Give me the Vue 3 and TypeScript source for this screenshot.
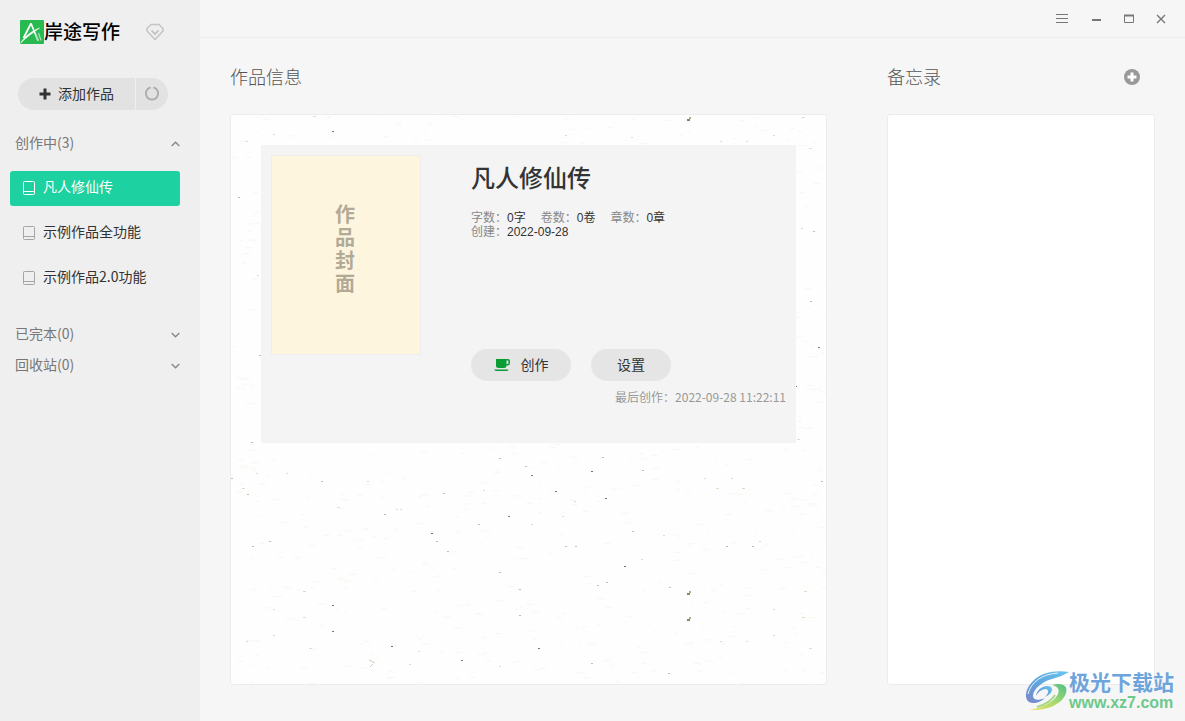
<script setup lang="ts">
import { ref } from 'vue'

interface Speck {
  x: number
  y: number
  r: number
  tone: string
}

const works = ['凡人修仙传', '示例作品全功能', '示例作品2.0功能']
const selected = ref(0)

const stats = [
  { label: '字数：', value: '0字' },
  { label: '卷数：', value: '0卷' },
  { label: '章数：', value: '0章' },
]

const dark = [
  [201, 419], [102, 491], [102, 517], [161, 532], [231, 546], [278, 402], [325, 377], [361, 357],
  [375, 384], [301, 361], [394, 452], [419, 328], [102, 17], [565, 272], [308, 534], [588, 233],
]
const mid = [
  [154, 400], [206, 427], [269, 344], [91, 367], [22, 432], [39, 427], [17, 380], [21, 328], [1, 364],
  [248, 410], [217, 437], [269, 458], [289, 475], [289, 501], [213, 379], [376, 468], [367, 471],
  [439, 473], [438, 559], [361, 549], [402, 417], [335, 432], [345, 432], [496, 432], [522, 432],
  [412, 356], [372, 343], [295, 352], [591, 367], [583, 117], [580, 187], [29, 241], [8, 83],
]
const pale = [
  [43, 495], [43, 521], [16, 527], [188, 537], [179, 550], [269, 552], [344, 387], [332, 402], [301, 410],
  [433, 421], [474, 364], [501, 364], [490, 527], [516, 527], [543, 495], [543, 521], [411, 445],
  [16, 27], [43, 20], [27, 161], [335, 21], [490, 27], [516, 27], [543, 21], [401, 23], [571, 114],
  [166, 395], [170, 395], [26, 359], [56, 359], [137, 367], [253, 376], [529, 427],
]
const tan = [
  [73, 477], [73, 503], [79, 534], [12, 374], [107, 393], [567, 325], [579, 534], [486, 374],
  [512, 374], [574, 477], [572, 503], [579, 34], [572, 3], [83, 2],
]
const clumps = [[458, 4], [458, 478], [458, 504]]

const toSpecks = (points: number[][], r: number, tone: string): Speck[] =>
  points.map(([x, y]) => ({ x, y, r, tone }))

const specks: Speck[] = [
  ...toSpecks(dark, 2, '#74746e'),
  ...toSpecks(mid, 2, '#bebeba'),
  ...toSpecks(pale, 2, '#dcdcd6'),
  ...toSpecks(tan, 3, '#e0dcc6'),
]

let seed = 20220928
const random = () => {
  seed = (seed * 16807) % 2147483647
  return seed / 2147483647
}
const fibres = Array.from({ length: 2600 }, () => {
  const x = Math.round(random() * 1200)
  const y = Math.round(random() * 900)
  const dx = Math.round(2 + random() * 7)
  const dy = Math.round(random() * 3 - 1.5)
  return `M${x} ${y}l${dx} ${dy}`
}).join('')
</script>

<template>
  <div class="app">
    <aside class="sidebar">
      <header class="brand">
        <svg class="brand-mark" viewBox="0 0 24 24" aria-hidden="true">
          <rect width="24" height="24" rx="1" fill="#28b950" />
          <path d="M3.500 18 11 3.500 18 20.500" fill="none" stroke="#fff" stroke-width="1.700" stroke-linejoin="bevel" />
          <path d="M0.500 23C5 16 11 11.500 19.500 8 13 12.500 7 17 0.500 23Z" fill="#fff" stroke="#fff" stroke-width="0.500" />
          <path d="M15.500 14.500 18.500 21M18.500 13 21 20.500" stroke="#a9e0b9" stroke-width="1.200" />
        </svg>
        <span class="brand-name">岸途写作</span>
        <button class="plain gem" type="button" aria-label="会员">
          <svg width="18" height="18" viewBox="0 0 18 18" fill="none" stroke="#c4c4c4" stroke-width="1.500" stroke-linejoin="round">
            <path d="M5 1.500h8L17 5.500V8L9 16.500 1 8V5.500Z" />
            <path d="M5.500 7.500 9 11l3.500-3.500" stroke-width="1.800" />
          </svg>
        </button>
      </header>

      <div class="add-group">
        <button class="add" type="button">
          <svg width="12" height="12" viewBox="0 0 12 12" aria-hidden="true">
            <path d="M6 0.500v11M0.500 6h11" stroke="#333" stroke-width="3" />
          </svg>
          <span class="label">添加作品</span>
        </button>
        <button class="sync" type="button" aria-label="同步">
          <svg width="16" height="16" viewBox="0 0 16 16" fill="none" stroke="#aaa" stroke-width="1.800">
            <path d="M9.500 1.400a6.200 6.200 0 1 1-3 0" />
          </svg>
        </button>
      </div>

      <nav class="groups">
        <button class="group" type="button">
          <span class="label">创作中(3)</span>
          <svg width="9" height="6" viewBox="0 0 9 6"><path d="M0.700 5 4.500 1.200 8.300 5" /></svg>
        </button>
        <ul class="works">
          <li v-for="(work, i) in works" :key="work">
            <button class="work" :class="{ active: i === selected }" type="button" @click="selected = i">
              <svg width="12" height="14" viewBox="0 0 12 14" fill="none" stroke="currentColor">
                <rect x="0.500" y="0.500" width="11" height="13" rx="1" />
                <path d="M1 10.500h10" />
              </svg>
              <span class="label">{{ work }}</span>
            </button>
          </li>
        </ul>
        <button class="group" type="button">
          <span class="label">已完本(0)</span>
          <svg width="9" height="6" viewBox="0 0 9 6"><path d="M0.700 1 4.500 4.800 8.300 1" /></svg>
        </button>
        <button class="group" type="button">
          <span class="label">回收站(0)</span>
          <svg width="9" height="6" viewBox="0 0 9 6"><path d="M0.700 1 4.500 4.800 8.300 1" /></svg>
        </button>
      </nav>
    </aside>

    <main class="main">
      <div class="titlebar">
        <button class="plain win menu" type="button" aria-label="菜单">
          <svg width="12" height="10" viewBox="0 0 12 10"><path d="M0 0.500h12M0 4.500h12M0 8.500h12" /></svg>
        </button>
        <button class="plain win" type="button" aria-label="最小化">
          <svg width="10" height="10" viewBox="0 0 10 10"><path d="M0 6h9" stroke-width="2" /></svg>
        </button>
        <button class="plain win" type="button" aria-label="最大化">
          <svg width="10" height="10" viewBox="0 0 10 10"><path d="M0.500 1v7.500h9V1" /><path d="M0 1.500h10" stroke-width="2" /></svg>
        </button>
        <button class="plain win" type="button" aria-label="关闭">
          <svg width="10" height="10" viewBox="0 0 10 10"><path d="M1 1l8 8M9 1 1 9" stroke-width="1.400" /></svg>
        </button>
      </div>

      <div class="columns">
        <section class="column">
          <div class="head"><h2>作品信息</h2></div>
          <div class="panel">
            <svg class="paper" aria-hidden="true">
              <path :d="fibres" class="fibre" />
              <rect
                v-for="(s, i) in specks"
                :key="i"
                :x="s.x - 1"
                :y="s.y - 1"
                :width="s.r"
                height="1"
                :fill="s.tone"
              />
              <g v-for="([x, y], i) in clumps" :key="'c' + i">
                <rect :x="x - 2" :y="y" width="3" height="2" fill="#8a8468" />
                <rect :x="x" :y="y - 2" width="2" height="2" fill="#b5aa87" />
              </g>
              <path d="M138 545l4 2 2 1M142 549l-3 3" stroke="#d2d0b8" fill="none" />
            </svg>

            <article class="card">
              <div class="cover"><span>作品封面</span></div>
              <div class="details">
                <div class="info">
                  <div>
                    <h1>凡人修仙传</h1>
                    <dl class="stats">
                      <div v-for="s in stats" :key="s.label">
                        <dt>{{ s.label }}</dt><dd>{{ s.value }}</dd>
                      </div>
                    </dl>
                    <dl class="stats">
                      <div><dt>创建：</dt><dd>2022-09-28</dd></div>
                    </dl>
                  </div>
                  <div class="actions">
                    <button class="pill write" type="button">
                      <svg width="16" height="12" viewBox="0 0 16 12" aria-hidden="true">
                        <path d="M2 0h12a2 2 0 0 1 2 2v2a2.500 2.500 0 0 1-2.500 2.500H12.500A2.500 2.500 0 0 1 10 9H4.500A2.500 2.500 0 0 1 2 6.500ZM12.500 1.500V5H13.500A1 1 0 0 0 14.500 4V2.500A1 1 0 0 0 13.500 1.500Z" fill="#0a9c35" fill-rule="evenodd" />
                        <path d="M0 10.500h14.500l-1 1.500h-12Z" fill="#0a9c35" />
                      </svg>
                      <span class="label">创作</span>
                    </button>
                    <button class="pill settings" type="button"><span class="label">设置</span></button>
                  </div>
                </div>
                <p class="last">最后创作：2022-09-28 11:22:11</p>
              </div>
            </article>
          </div>
        </section>

        <section class="column">
          <div class="head">
            <h2>备忘录</h2>
            <button class="plain new-memo" type="button" aria-label="新建备忘">
              <svg width="16" height="16" viewBox="0 0 16 16">
                <circle cx="8" cy="8" r="8" fill="#999" />
                <path d="M8 3.500v9M3.500 8h9" stroke="#fff" stroke-width="3" />
              </svg>
            </button>
          </div>
          <div class="panel memo"></div>
        </section>
      </div>
    </main>

    <div class="watermark">
      <svg width="44" height="42" viewBox="0 0 44 42" aria-hidden="true">
        <defs>
          <linearGradient id="sky" x1="0" y1="1" x2="1" y2="0">
            <stop offset="0" stop-color="#7a86c9" />
            <stop offset="0.500" stop-color="#5fa8df" />
            <stop offset="1" stop-color="#6cc4f0" />
          </linearGradient>
          <linearGradient id="leaf" x1="0" y1="1" x2="1" y2="0">
            <stop offset="0" stop-color="#f0e25e" />
            <stop offset="0.500" stop-color="#a5d96c" />
            <stop offset="1" stop-color="#4fbf8a" />
          </linearGradient>
        </defs>
        <path d="M44 2C31 0 17 2 8 11 0 19-1 29 4 32 8 34 15 33 20 28 13 31 8 30 8 26 8 19 18 11 27 9 34 7 39 5 44 2Z" fill="url(#sky)" />
        <path d="M3 24C6 12 17 4 33 3" fill="none" stroke="#e8f4fb" stroke-width="1" />
        <path d="M11 26C12 19 20 14 26 17 29 20 25 25 20 27 24 23 24 20 21 19 17 19 13 22 11 26Z" fill="url(#sky)" />
        <path d="M27 15C38 12 43 16 41 23 38 33 24 41 4 40 18 38 30 31 33 24 35 19 32 16 27 15Z" fill="url(#leaf)" />
        <path d="M12 37C22 34 27 30 30 25" fill="none" stroke="#a5d98a" stroke-width="2" />
      </svg>
      <div class="watermark-text">
        <span class="site">极光下载站</span>
        <span class="url">www.xz7.com</span>
      </div>
    </div>
  </div>
</template>

<style>
body {
  margin: 0;
}
</style>

<style scoped>
.app {
  position: relative;
  display: flex;
  min-height: 100vh;
  background: #f6f6f6;
  color: #333;
  font: 14px/20px "Noto Sans CJK SC", sans-serif;
}

button {
  margin: 0;
  padding: 0;
  border: 0;
  background: none;
  color: inherit;
  font: inherit;
  cursor: pointer;
}

svg {
  display: block;
  flex: none;
}

h1,
h2,
p,
dl,
dd,
ul {
  margin: 0;
  padding: 0;
}

.label {
  padding-bottom: 3px;
}

.plain {
  display: flex;
  align-items: center;
  justify-content: center;
}

.sidebar {
  box-sizing: border-box;
  flex: none;
  width: 200px;
  padding: 20px 20px 0 10px;
  background: #efefef;
}

.brand {
  display: flex;
  align-items: center;
  height: 24px;
  padding-left: 10px;
}

.brand-mark {
  width: 24px;
  height: 24px;
}

.brand-name {
  padding-bottom: 2px;
  color: #000;
  font-size: 19px;
  font-weight: 500;
  line-height: 24px;
}

.gem {
  margin-left: auto;
  margin-right: 16px;
}

.add-group {
  display: flex;
  gap: 1px;
  height: 32px;
  margin: 34px 12px 18px 8px;
}

.add,
.sync {
  display: flex;
  align-items: center;
  justify-content: center;
  background: #e2e2e2;
}

.add {
  flex: 1;
  gap: 7px;
  border-radius: 16px 0 0 16px;
}

.sync {
  width: 32px;
  border-radius: 0 16px 16px 0;
}

.group {
  display: flex;
  align-items: center;
  justify-content: space-between;
  width: 100%;
  height: 31px;
  padding: 0 0 0 5px;
  color: #777;
}

.group path {
  fill: none;
  stroke: #888;
  stroke-width: 1.4;
}

.works {
  display: flex;
  flex-direction: column;
  gap: 10px;
  margin: 12px 0 23px;
  list-style: none;
}

.work {
  display: flex;
  align-items: center;
  gap: 8px;
  width: 100%;
  height: 35px;
  padding: 0 0 2px 13px;
  border-radius: 3px;
}

.work svg {
  color: #a5a5a5;
}

.work.active {
  background: #1dd1a1;
  color: #fff;
}

.work.active svg {
  color: #fff;
}

.main {
  display: flex;
  flex: 1;
  flex-direction: column;
  min-width: 0;
}

.titlebar {
  display: flex;
  justify-content: flex-end;
  height: 37px;
  padding-right: 8px;
  border-bottom: 1px solid #ededed;
}

.win {
  width: 32px;
}

.menu {
  margin-right: 3px;
}

.win path {
  fill: none;
  stroke: #777;
}

.columns {
  display: grid;
  flex: 1;
  grid-template-columns: minmax(0, 1fr) 268px;
  gap: 60px;
  padding: 0 30px 36px;
}

.column {
  display: flex;
  flex-direction: column;
}

.head {
  display: flex;
  align-items: center;
  justify-content: space-between;
  box-sizing: border-box;
  height: 76px;
  padding: 2px 15px 0 0;
}

h2 {
  padding-bottom: 2px;
  color: #555;
  font-size: 18px;
  font-weight: 300;
  line-height: 24px;
}

.panel {
  position: relative;
  flex: 1;
  padding: 30px;
  border: 1px solid #ececec;
  border-radius: 3px;
  background: #fefefe;
}

.paper {
  position: absolute;
  inset: 0;
  width: 100%;
  height: 100%;
}

.fibre {
  fill: none;
  stroke: #f8f7f2;
}

.card {
  position: relative;
  display: flex;
  gap: 50px;
  box-sizing: border-box;
  min-height: 298px;
  padding: 10px;
  background: #f4f4f4;
}

.cover {
  display: flex;
  align-items: center;
  justify-content: center;
  box-sizing: border-box;
  flex: none;
  width: 150px;
  height: 200px;
  border: 1px solid #eee;
  background: #fef5de;
}

.cover span {
  width: 20px;
  padding: 0 2px 14px 0;
  color: #b2aa96;
  font-size: 20px;
  font-weight: 700;
  line-height: 23px;
}

.details {
  flex: 1;
}

.info {
  display: flex;
  flex-direction: column;
  justify-content: space-between;
  box-sizing: border-box;
  height: 226px;
  padding-top: 6px;
}

h1 {
  margin-bottom: 18px;
  font-size: 24px;
  font-weight: 500;
  line-height: 32px;
}

.stats {
  display: flex;
  gap: 15px;
  font: 12px/14px "Liberation Sans", "Noto Sans CJK SC", sans-serif;
}

.stats div {
  display: flex;
}

.stats dt {
  color: #888;
}

.actions {
  display: flex;
  gap: 20px;
}

.pill {
  display: flex;
  align-items: center;
  justify-content: center;
  height: 32px;
  border-radius: 16px;
  background: #e5e5e5;
}

.write {
  gap: 11px;
  width: 100px;
}

.settings {
  width: 80px;
}

.last {
  margin-top: 6px;
  color: #999;
  font-size: 12px;
  line-height: 20px;
  text-align: right;
}

.memo {
  background: #fff;
}

.watermark {
  position: absolute;
  right: 11px;
  bottom: 8px;
  display: flex;
  align-items: center;
}

.watermark-text {
  display: flex;
  flex-direction: column;
}

.site {
  color: #6ea4dc;
  font-size: 21px;
  font-weight: 700;
  line-height: 24px;
}

.url {
  color: #6dc98a;
  font: 700 16px/20px "Liberation Sans", sans-serif;
}
</style>
